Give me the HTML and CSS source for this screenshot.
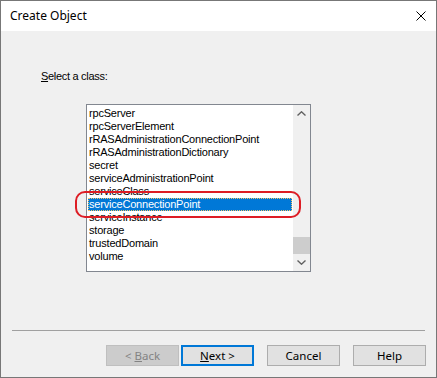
FILE: index.html
```html
<!DOCTYPE html>
<html lang="en">
<head>
    <meta charset="UTF-8">
    <title>Create Object</title>
    <link rel="stylesheet" href="styles.css">
</head>
<body>

<div class="window">
    <div class="titlebar">
        <span class="title">Create Object</span>
        <svg class="close" width="10" height="10" viewBox="0 0 10 10">
            <path d="M0.5 0.5 L9.5 9.5 M9.5 0.5 L0.5 9.5" stroke="#000" stroke-width="1"/>
        </svg>
    </div>

    <div class="content">
        <div class="label"><u>S</u>elect a class:</div>

        <div class="listbox">
            <ul class="items">
                <li>rpcServer</li>
                <li>rpcServerElement</li>
                <li>rRASAdministrationConnectionPoint</li>
                <li>rRASAdministrationDictionary</li>
                <li>secret</li>
                <li>serviceAdministrationPoint</li>
                <li>serviceClass</li>
                <li class="selected">serviceConnectionPoint</li>
                <li>serviceInstance</li>
                <li>storage</li>
                <li>trustedDomain</li>
                <li>volume</li>
            </ul>
            <div class="scrollbar">
                <div class="arrow">
                    <svg width="9" height="5" viewBox="0 0 9 5"><path d="M0.5 4.5 L4.5 0.8 L8.5 4.5" fill="none" stroke="#606060" stroke-width="1.4"/></svg>
                </div>
                <div class="track">
                    <div class="thumb"></div>
                </div>
                <div class="arrow">
                    <svg width="9" height="5" viewBox="0 0 9 5"><path d="M0.5 0.5 L4.5 4.2 L8.5 0.5" fill="none" stroke="#606060" stroke-width="1.4"/></svg>
                </div>
            </div>
        </div>

        <div class="separator"></div>

        <div class="buttons">
            <button class="btn" disabled>&lt; <u>B</u>ack</button>
            <button class="btn default"><u>N</u>ext &gt;</button>
            <button class="btn spaced">Cancel</button>
            <button class="btn spaced">Help</button>
        </div>
    </div>

    <!-- annotation drawn over the dialog -->
    <div class="highlight-ring"></div>
</div>

</body>
</html>
```

FILE: styles.css
```css
body {
    margin: 0;
    padding: 0;
    background-color: #ffffff;
}
.window {
    position: relative;
    box-sizing: border-box;
    width: 437px;
    height: 378px;
    border: 1px solid #777777;
    background-color: #f0f0f0;
    display: flex;
    flex-direction: column;
    font-family: "Liberation Sans", Arial, sans-serif;
    font-size: 11px;
    color: #000000;
}
.titlebar {
    height: 30px;
    flex: none;
    background-color: #ffffff;
    display: flex;
    align-items: center;
    justify-content: space-between;
    padding: 0 10px 0 9px;
}
.title {
    font-family: "Noto Sans", "Open Sans", sans-serif;
    font-size: 12px;
    margin-top: -1px;
}
.close {
    display: block;
    margin-top: -1px;
}
.content {
    flex: 1;
    display: flex;
    flex-direction: column;
    padding: 39px 0 0 0;
}
.label {
    margin-left: 40px;
    line-height: 13px;
    letter-spacing: -0.3px;
}
.listbox {
    box-sizing: border-box;
    width: 225px;
    height: 168px;
    margin: 21px 0 0 85px;
    border: 1px solid #828790;
    background-color: #ffffff;
    display: flex;
}
.items {
    list-style: none;
    margin: 0;
    padding: 2px 1px 0 1px;
    flex: 1;
    letter-spacing: -0.2px;
}
.items li {
    height: 13px;
    line-height: 13px;
    padding-left: 1px;
    white-space: nowrap;
}
.items li.selected {
    box-sizing: border-box;
    background-color: #0078d7;
    color: #ffffff;
    padding-left: 0;
    border: 1px dotted #f5c46a;
    line-height: 11px;
}
.scrollbar {
    width: 17px;
    flex: none;
    background-color: #f0f0f0;
    display: flex;
    flex-direction: column;
}
.arrow {
    height: 17px;
    display: flex;
    align-items: center;
    justify-content: center;
}
.arrow svg {
    display: block;
}
.track {
    flex: 1;
    display: flex;
    flex-direction: column;
    justify-content: flex-end;
}
.thumb {
    height: 17px;
    background-color: #cdcdcd;
}
.separator {
    margin: 58px 11px 0 11px;
    height: 1px;
    background-color: #a0a0a0;
}
.buttons {
    display: flex;
    margin: 14px 0 0 105px;
}
.btn {
    box-sizing: border-box;
    width: 73px;
    height: 21px;
    margin: 0 2px 0 0;
    padding: 0;
    border: 1px solid #adadad;
    background-color: #e1e1e1;
    font-family: "Noto Sans", "Open Sans", sans-serif;
    font-size: 11.5px;
    color: #000000;
}
.btn[disabled] {
    background-color: #cccccc;
    border-color: #bfbfbf;
    color: #838383;
}
.btn.default {
    border: 2px solid #0078d7;
}
.btn.spaced {
    margin-left: 11px;
}
.highlight-ring {
    position: absolute;
    left: 74px;
    top: 190px;
    width: 222px;
    height: 23px;
    border: 2px solid #dd1d25;
    border-radius: 10px;
}
```
